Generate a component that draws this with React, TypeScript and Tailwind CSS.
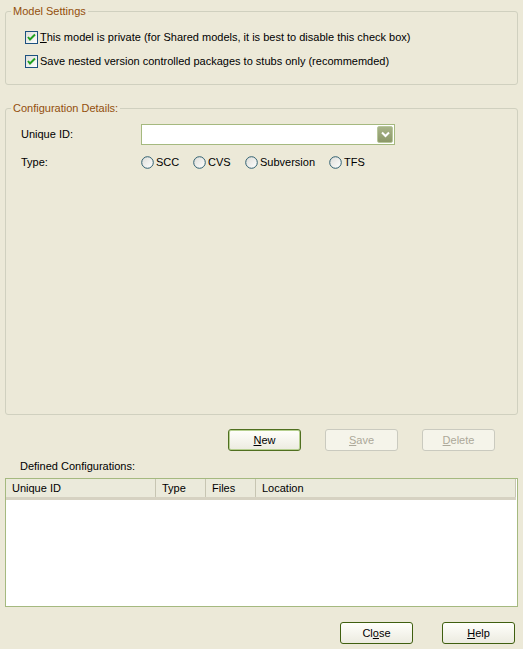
import React from "react";

const font = { fontFamily: "'Liberation Sans', Arial, sans-serif" };

function CheckBox() {
  return (
    <svg width="13" height="13" viewBox="0 0 13 13" className="shrink-0">
      <defs>
        <linearGradient id="cbFill" x1="0" y1="0" x2="1" y2="1">
          <stop offset="0%" stopColor="#DCDCD7" />
          <stop offset="100%" stopColor="#FFFFFF" />
        </linearGradient>
      </defs>
      <rect x="0.5" y="0.5" width="12" height="12" fill="url(#cbFill)" stroke="#1C5180" />
      <path d="M3 6 L5 8.5 L10 3.5" fill="none" stroke="#21A121" strokeWidth="2" />
    </svg>
  );
}

function Radio() {
  return (
    <svg width="13" height="13" viewBox="0 0 13 13" className="shrink-0">
      <defs>
        <linearGradient id="rbFill" x1="0" y1="0" x2="1" y2="1">
          <stop offset="0%" stopColor="#DCDCD7" />
          <stop offset="100%" stopColor="#FFFFFF" />
        </linearGradient>
      </defs>
      <circle cx="6.5" cy="6.5" r="5.8" fill="url(#rbFill)" stroke="#2F5F70" />
    </svg>
  );
}

function Btn({ label, u, rest, variant }: { label?: string; u: string; rest: string; variant: "default" | "normal" | "disabled" }) {
  const cls =
    variant === "default"
      ? "border-[#4F6F1F] shadow-[inset_0_0_0_1px_#B6CF8F] text-black bg-gradient-to-b from-[#FFFFFB] to-[#ECEBE0]"
      : variant === "normal"
        ? "border-[#3F5F0F] text-black bg-gradient-to-b from-[#FFFFFB] to-[#ECEBE0]"
        : "border-[#CACABF] text-[#ACA899] bg-[#F5F4EA]";
  return (
    <div className={`w-[73px] h-[22px] rounded-[3px] border flex items-center justify-center text-[11px] ${cls}`}>
      {label}
      <span className="underline">{u}</span>
      {rest}
    </div>
  );
}

export default function App() {
  return (
    <div style={font} className="w-[523px] h-[649px] bg-[#ECE9D8] text-[11px] leading-[13px] text-black flex flex-col overflow-hidden">
      {/* Model Settings */}
      <fieldset className="mx-[5px] mt-[5px] h-[80px] border border-[#D0D0BF] rounded-[3px] px-[19px] min-w-0">
        <legend className="-ml-[14px] px-[2px] text-[#934F0C] leading-[13px]">Model Settings</legend>
        <div className="flex flex-col gap-[11px] pt-[13px]">
          <div className="flex items-center gap-[2px] h-[13px]">
            <CheckBox />
            <span><span className="underline">T</span>his model is private (for Shared models, it is best to disable this check box)</span>
          </div>
          <div className="flex items-center gap-[2px] h-[13px]">
            <CheckBox />
            <span>Save nested version controlled packages to stubs only (recommemded)</span>
          </div>
        </div>
      </fieldset>

      {/* Configuration Details */}
      <fieldset className="mx-[5px] mt-[17px] h-[313px] border border-[#D0D0BF] rounded-[3px] px-[15px] min-w-0">
        <legend className="-ml-[10px] px-[2px] text-[#934F0C] leading-[13px]">Configuration Details:</legend>
        <div className="flex items-center pt-[9px]">
          <span className="w-[120px]">Unique ID:</span>
          <div className="w-[254px] h-[21px] border border-[#A5B97F] bg-white flex items-center justify-end pr-[1px]">
            <div className="w-[16px] h-[17px] rounded-[2px] border border-[#B8C79B] bg-gradient-to-b from-[#A8B488] to-[#8C9868] flex items-center justify-center">
              <svg width="9" height="7" viewBox="0 0 9 7">
                <path d="M1 1.5 L4.5 5 L8 1.5" fill="none" stroke="#FFFFFF" strokeWidth="2" />
              </svg>
            </div>
          </div>
        </div>
        <div className="flex items-center pt-[11px]">
          <span className="w-[120px]">Type:</span>
          <div className="flex items-center">
            <div className="flex items-center gap-[2px] w-[52px]"><Radio /><span>SCC</span></div>
            <div className="flex items-center gap-[2px] w-[52px]"><Radio /><span>CVS</span></div>
            <div className="flex items-center gap-[2px] w-[84px]"><Radio /><span>Subversion</span></div>
            <div className="flex items-center gap-[2px]"><Radio /><span>TFS</span></div>
          </div>
        </div>
      </fieldset>

      {/* Action buttons */}
      <div className="flex pl-[228px] gap-[24px] mt-[14px]">
        <Btn u="N" rest="ew" variant="default" />
        <Btn u="S" rest="ave" variant="disabled" />
        <Btn u="D" rest="elete" variant="disabled" />
      </div>

      <div className="pl-[20px] mt-[9px] leading-[13px]">Defined Configurations:</div>

      {/* List view */}
      <div className="mx-[5px] mt-[5px] h-[129px] border border-[#A5B97F] bg-white pr-[1px]">
        <div className="flex h-[21px] bg-[#EBEADB] border-b-[3px] border-[#D6D2C2]">
          <div className="w-[150px] pl-[6px] flex items-center border-r border-[#C7C5B2]">Unique ID</div>
          <div className="w-[50px] pl-[6px] flex items-center border-r border-[#C7C5B2]">Type</div>
          <div className="w-[50px] pl-[6px] flex items-center border-r border-[#C7C5B2]">Files</div>
          <div className="flex-1 pl-[6px] flex items-center border-r border-[#C7C5B2]">Location</div>
        </div>
      </div>

      {/* Bottom buttons */}
      <div className="flex justify-end gap-[29px] pr-[8px] mt-[15px]">
        <Btn label="Cl" u="o" rest="se" variant="normal" />
        <Btn u="H" rest="elp" variant="normal" />
      </div>
    </div>
  );
}
